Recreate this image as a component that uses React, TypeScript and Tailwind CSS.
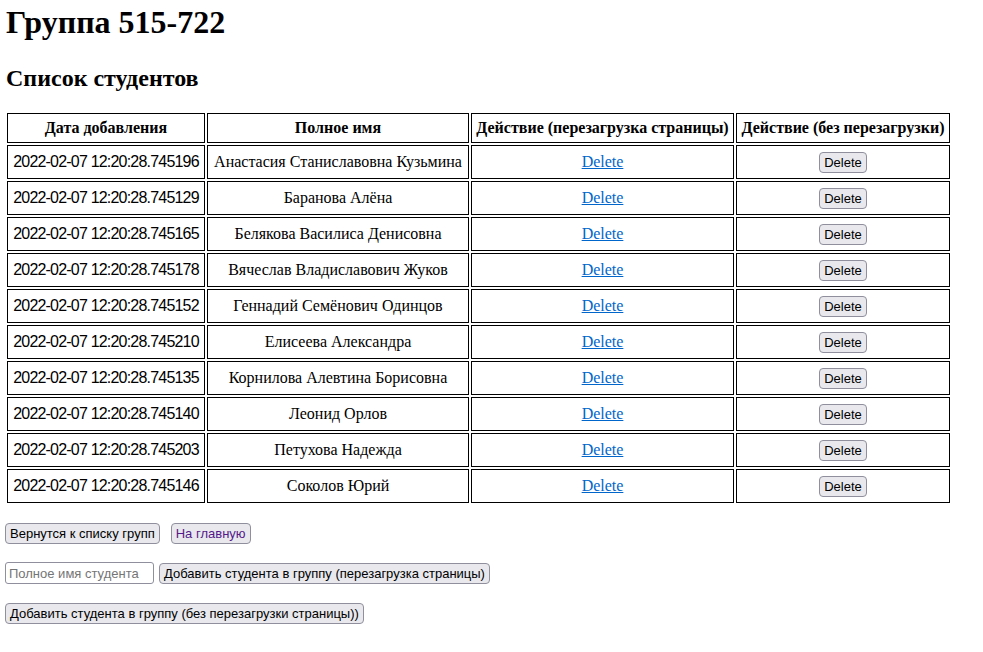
import React from "react";

const rows: [string, string][] = [
  ["2022-02-07 12:20:28.745196", "Анастасия Станиславовна Кузьмина"],
  ["2022-02-07 12:20:28.745129", "Баранова Алёна"],
  ["2022-02-07 12:20:28.745165", "Белякова Василиса Денисовна"],
  ["2022-02-07 12:20:28.745178", "Вячеслав Владиславович Жуков"],
  ["2022-02-07 12:20:28.745152", "Геннадий Семёнович Одинцов"],
  ["2022-02-07 12:20:28.745210", "Елисеева Александра"],
  ["2022-02-07 12:20:28.745135", "Корнилова Алевтина Борисовна"],
  ["2022-02-07 12:20:28.745140", "Леонид Орлов"],
  ["2022-02-07 12:20:28.745203", "Петухова Надежда"],
  ["2022-02-07 12:20:28.745146", "Соколов Юрий"],
];

const btn =
  "h-[21px] px-[4px] bg-[#e9e9ed] border border-[#8f8f9d] rounded-[4px] text-[13px] leading-none text-black font-['Liberation_Sans',Arial,sans-serif] whitespace-nowrap";

export default function App() {
  return (
    <div className="bg-white text-black min-h-[652px] font-['Liberation_Serif','Times_New_Roman',serif]">
      <h1 className="pt-[4px] pl-[6px] text-[32px] font-bold leading-[36px]">Группа 515-722</h1>
      <h2 className="mt-[24px] pl-[6px] text-[24px] font-bold leading-[28px]">Список студентов</h2>
      <table className="mt-[19px] ml-[5px] w-[947px] border-separate border-spacing-[2px] table-fixed text-[16px]">
        <thead>
          <tr className="h-[30px]">
            <th className="w-[198px] border border-black font-bold text-center whitespace-nowrap">Дата добавления</th>
            <th className="w-[262px] border border-black font-bold text-center whitespace-nowrap">Полное имя</th>
            <th className="w-[263px] border border-black font-bold text-center whitespace-nowrap">Действие (перезагрузка страницы)</th>
            <th className="w-[214px] border border-black font-bold text-center whitespace-nowrap">Действие (без перезагрузки)</th>
          </tr>
        </thead>
        <tbody>
          {rows.map(([d, n]) => (
            <tr key={d} className="h-[34px]">
              <td className="border border-black text-center font-['Liberation_Sans',Arial,sans-serif] tracking-[-0.8px] whitespace-nowrap">
                {d}
              </td>
              <td className="border border-black text-center whitespace-nowrap">{n}</td>
              <td className="border border-black text-center">
                <a href="#" className="text-[#0066cc] underline">Delete</a>
              </td>
              <td className="border border-black text-center">
                <button className={btn}>Delete</button>
              </td>
            </tr>
          ))}
        </tbody>
      </table>
      <div className="mt-[18px] pl-[5px] flex items-center gap-[11px]">
        <button className={btn}>Вернутся к списку групп</button>
        <button className={btn + " !text-[#551a8b]"}>На главную</button>
      </div>
      <div className="mt-[18px] pl-[5px] flex items-center gap-[5px]">
        <input
          placeholder="Полное имя студента"
          className="w-[149px] h-[22px] px-[3px] border border-[#8f8f9d] rounded-[3px] text-[13px] font-['Liberation_Sans',Arial,sans-serif] placeholder:text-[#757575]"
        />
        <button className={btn}>Добавить студента в группу (перезагрузка страницы)</button>
      </div>
      <div className="mt-[19px] pl-[5px] flex">
        <button className={btn}>Добавить студента в группу (без перезагрузки страницы))</button>
      </div>
    </div>
  );
}
